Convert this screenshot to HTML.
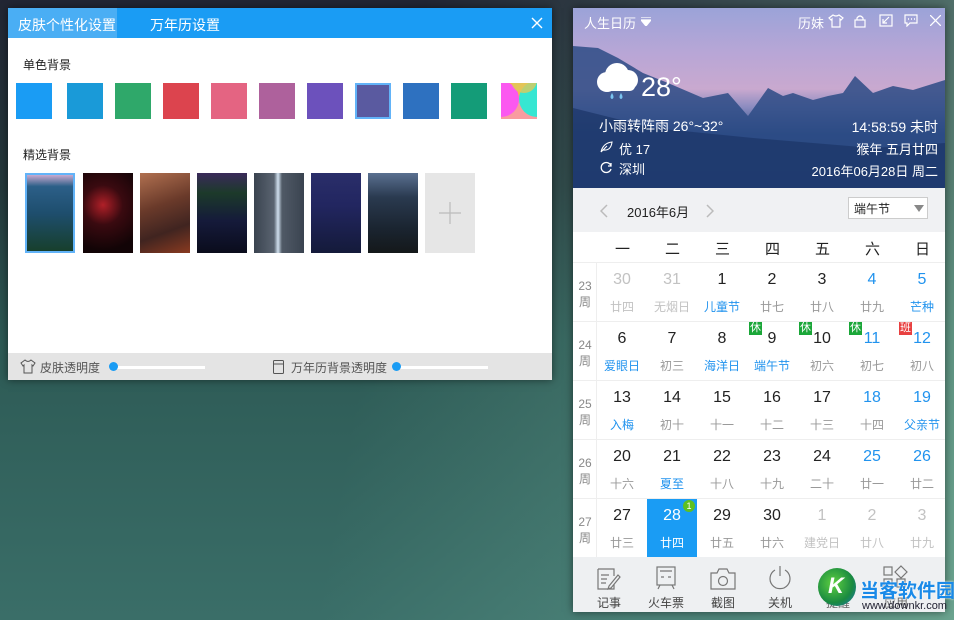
<!DOCTYPE html>
<html><head><meta charset="utf-8"><style>
*{margin:0;padding:0;box-sizing:border-box}
body{width:954px;height:620px;overflow:hidden;position:relative;font-family:"Liberation Sans","Noto Sans CJK SC",sans-serif;
background:linear-gradient(180deg,#222634 0%,#24383b 30%,#2d5a55 55%,#3a6e68 100%);}
.bgr{position:absolute;left:0;top:0;width:954px;height:620px;background:linear-gradient(100deg,rgba(0,0,0,0) 40%,rgba(120,180,160,.35) 80%,rgba(140,200,170,.6) 100%)}
.a{position:absolute;white-space:nowrap}
#lw{position:absolute;left:8px;top:8px;width:544px;height:372px;background:#fff;box-shadow:0 0 8px rgba(0,0,0,.5)}
#lt{position:absolute;left:0;top:0;width:544px;height:30px;background:#1a9cf4}
.sw{position:absolute;top:75px;width:36px;height:36px}
.th{position:absolute;top:165px;width:50px;height:80px}
#rw{position:absolute;left:573px;top:8px;width:372px;height:604px;background:#fff;box-shadow:0 0 8px rgba(0,0,0,.5);overflow:hidden}
.wk{position:absolute;left:0;width:24px;text-align:center;color:#888;font-size:12px;line-height:16px}
.c{position:absolute;width:50px;height:59px;text-align:center}
.c .n{position:absolute;top:8px;left:0;width:50px;font-size:16px;color:#222}
.c .l{position:absolute;top:35px;left:0;width:50px;font-size:12px;color:#999}
.b{color:#2193ee!important}.g{color:#c2c2c2!important}
.tag{position:absolute;top:0px;left:0;width:13px;height:13px;font-size:11px;line-height:13px;color:#fff;text-align:center}
.tb{position:absolute;top:583px;font-size:12px;color:#444;width:50px;text-align:center}
</style></head><body>
<div class="bgr"></div>

<div id="lw">
 <div id="lt">
  <div class="a" style="left:0;top:0;width:109px;height:30px;background:#4aaef4"></div>
  <div class="a" style="left:10px;top:7px;color:#fff;font-size:14px">皮肤个性化设置</div>
  <div class="a" style="left:142px;top:7px;color:#fff;font-size:14px">万年历设置</div>
  <svg class="a" style="left:523px;top:9px" width="12" height="12"><path d="M1 1L11 11M11 1L1 11" stroke="#fff" stroke-width="1.4"/></svg>
 </div>
 <div class="a" style="left:15px;top:48px;font-size:12px;color:#222">单色背景</div>
 <div class="sw" style="left:8px;background:#1a9cf4"></div>
 <div class="sw" style="left:59px;background:#1a9ad8"></div>
 <div class="sw" style="left:107px;background:#2fa86a"></div>
 <div class="sw" style="left:155px;background:#dc444e"></div>
 <div class="sw" style="left:203px;background:#e46482"></div>
 <div class="sw" style="left:251px;background:#ae619c"></div>
 <div class="sw" style="left:299px;background:#6c51bc"></div>
 <div class="sw" style="left:347px;background:#5a5aa0;border:2px solid #62b3f8"></div>
 <div class="sw" style="left:395px;background:#2e71c0"></div>
 <div class="sw" style="left:443px;background:#149c78"></div>
 <div class="sw" style="left:493px;overflow:hidden;background:#f99ca0">
  <div class="a" style="left:-8px;top:-18px;width:36px;height:36px;border-radius:50%;background:#fbb44e"></div>
  <div class="a" style="left:-18px;top:-2px;width:36px;height:36px;border-radius:50%;background:#fb58f0"></div>
  <div class="a" style="left:18px;top:-2px;width:36px;height:36px;border-radius:50%;background:#36e6d2"></div>
  <div class="a" style="left:10px;top:-16px;width:26px;height:26px;border-radius:50%;background:#dfc95a;opacity:.8"></div>
 </div>
 <div class="a" style="left:15px;top:138px;font-size:12px;color:#222">精选背景</div>
 <div class="th" style="left:17px;border:2px solid #62b3f8;background:linear-gradient(180deg,#c9a9cf 0%,#2c5f88 15%,#1e4e6e 50%,#173f2c 100%)"></div>
 <div class="th" style="left:75px;background:radial-gradient(circle at 40% 40%,#b02028 0%,#3a0a10 35%,#120406 80%)"></div>
 <div class="th" style="left:132px;background:linear-gradient(160deg,#b07050 0%,#6a3a2a 40%,#402420 70%,#8a3a20 100%)"></div>
 <div class="th" style="left:189px;background:linear-gradient(180deg,#3a2a5a 0%,#1c3a2a 25%,#151a3a 60%,#0a0c1c 100%)"></div>
 <div class="th" style="left:246px;background:linear-gradient(90deg,#3a4350 0%,#5a6470 40%,#d0e0ee 48%,#505a66 56%,#3a4350 100%)"></div>
 <div class="th" style="left:303px;background:linear-gradient(180deg,#2a2e6a 0%,#222660 40%,#141a3a 100%)"></div>
 <div class="th" style="left:360px;background:linear-gradient(180deg,#5a7090 0%,#2a3a50 30%,#1a2430 70%,#14181a 100%)"></div>
 <div class="th" style="left:417px;background:#e6e6e6">
  <svg class="a" style="left:14px;top:29px" width="22" height="22"><path d="M11 0V22M0 11H22" stroke="#bbb" stroke-width="1.2"/></svg>
 </div>
 <div class="a" style="left:0;top:345px;width:544px;height:27px;background:#e4e4e4"></div>
 <svg class="a" style="left:12px;top:351px" width="16" height="15"><path d="M5 1L1 4L3 7L4 6V14H12V6L13 7L15 4L11 1Q8 4 5 1Z" fill="none" stroke="#555" stroke-width="1"/></svg>
 <div class="a" style="left:32px;top:351px;font-size:12px;color:#555">皮肤透明度</div>
 <div class="a" style="left:107px;top:358px;width:90px;height:3px;background:#fff"></div>
 <div class="a" style="left:101px;top:354px;width:9px;height:9px;border-radius:50%;background:#1a9cf4"></div>
 <svg class="a" style="left:265px;top:352px" width="11" height="14"><rect x=".5" y=".5" width="10" height="13" rx="1" fill="none" stroke="#555"/><path d="M0 4H11" stroke="#555"/></svg>
 <div class="a" style="left:283px;top:351px;font-size:12px;color:#555">万年历背景透明度</div>
 <div class="a" style="left:390px;top:358px;width:90px;height:3px;background:#fff"></div>
 <div class="a" style="left:384px;top:354px;width:9px;height:9px;border-radius:50%;background:#1a9cf4"></div>
</div>

<div id="rw">
 <div class="a" style="left:0;top:0;width:372px;height:180px;background:linear-gradient(180deg,#9ba3d8 0%,#b8a6d6 25%,#c9a9cf 45%,#8c8cc0 55%,#2c4e86 70%,#1d3c6e 100%)"></div>
 <svg class="a" style="left:0;top:30px" width="372" height="150"><path d="M0 8L25 10L45 20L70 35L95 45L130 60L155 55L175 78L195 50L210 58L220 55L240 62L255 58L270 55L282 38L300 55L320 48L340 52L372 42V150H0Z" fill="#2d4b85" opacity=".85"/><path d="M0 70L80 90L180 100L300 110L372 105V150H0Z" fill="#1b3566" opacity=".7"/></svg>
 <div class="a" style="left:11px;top:5px;color:#fff;font-size:13px">人生日历</div>
 <svg class="a" style="left:68px;top:9px" width="10" height="9"><path d="M0 0H10M0 3H10L5 9Z" stroke="#fff" fill="#fff" stroke-width="1.2"/></svg>
 <div class="a" style="left:225px;top:5px;color:#fff;font-size:13px">历妹</div>
 <svg class="a" style="left:255px;top:6px" width="16" height="14"><path d="M5 1L1 4L3 6L4 5V13H12V5L13 6L15 4L11 1Q8 3 5 1Z" fill="none" stroke="#fff" stroke-width="1.2"/></svg>
 <svg class="a" style="left:281px;top:6px" width="12" height="14"><rect x="1" y="6" width="10" height="7" fill="none" stroke="#fff" stroke-width="1.2"/><path d="M3 6V4Q6 0 9 4V6" fill="none" stroke="#fff" stroke-width="1.2"/></svg>
 <svg class="a" style="left:306px;top:6px" width="14" height="13"><rect x="1" y="1" width="12" height="11" fill="none" stroke="#fff" stroke-width="1.2"/><path d="M4 9L10 3M4 5V9H8" fill="none" stroke="#fff" stroke-width="1.2"/></svg>
 <svg class="a" style="left:331px;top:6px" width="14" height="13"><path d="M1 1H13V9H6L3 12V9H1Z" fill="none" stroke="#fff" stroke-width="1.2"/><path d="M4 5H5M7 5H8M10 5H11" stroke="#fff" stroke-width="1.5"/></svg>
 <svg class="a" style="left:357px;top:7px" width="11" height="11"><path d="M0 0L11 11M11 0L0 11" stroke="#fff" stroke-width="1.3"/></svg>
 <svg class="a" style="left:22px;top:52px" width="46" height="44"><g fill="#fff"><circle cx="12" cy="22" r="10"/><circle cx="22" cy="15" r="12"/><circle cx="33" cy="20" r="10"/><rect x="4" y="20" width="36" height="11" rx="5"/></g><path d="M17 33Q14 38 17 39Q20 38 17 33ZM26 33Q23 38 26 39Q29 38 26 33Z" fill="#7ac4f0"/></svg>
 <div class="a" style="left:68px;top:64px;color:#fff;font-size:27px">28°</div>
 <div class="a" style="left:26px;top:108px;color:#fff;font-size:14px">小雨转阵雨 26°~32°</div>
 <svg class="a" style="left:27px;top:133px" width="13" height="12"><path d="M1 11Q3 2 12 1Q11 10 3 9M1 11L7 5" fill="none" stroke="#fff" stroke-width="1.1"/></svg>
 <div class="a" style="left:46px;top:131px;color:#fff;font-size:13px">优 17</div>
 <svg class="a" style="left:27px;top:153px" width="13" height="13"><path d="M11 5A5 5 0 1 0 11 8M11 2V5H8" fill="none" stroke="#fff" stroke-width="1.3"/></svg>
 <div class="a" style="left:46px;top:151px;color:#fff;font-size:13px">深圳</div>
 <div class="a" style="right:7px;top:109px;color:#fff;font-size:14px">14:58:59 未时</div>
 <div class="a" style="right:7px;top:131px;color:#fff;font-size:13px">猴年 五月廿四</div>
 <div class="a" style="right:7px;top:153px;color:#fff;font-size:13px">2016年06月28日 周二</div>

 <div class="a" style="left:0;top:180px;width:372px;height:44px;background:#f0f1f3"></div>
 <svg class="a" style="left:27px;top:196px" width="8" height="14"><path d="M7 1L1 7L7 13" fill="none" stroke="#bbb" stroke-width="1.5"/></svg>
 <div class="a" style="left:54px;top:194px;font-size:13px;color:#222">2016年6月</div>
 <svg class="a" style="left:133px;top:196px" width="8" height="14"><path d="M1 1L7 7L1 13" fill="none" stroke="#bbb" stroke-width="1.5"/></svg>
 <div class="a" style="left:275px;top:189px;width:80px;height:22px;background:#fff;border:1px solid #ccc"></div>
 <div class="a" style="left:281px;top:192px;font-size:12px;color:#222">端午节</div>
 <svg class="a" style="left:341px;top:197px" width="10" height="7"><path d="M0 0H10L5 7Z" fill="#888"/></svg>

 <div class="a" style="left:0;top:224px;width:372px;height:30px;background:#fff"></div>
 <div class="a" style="left:24px;top:230px;width:350px;font-size:15px;color:#222">
  <span class="a" style="left:18px">一</span><span class="a" style="left:68px">二</span><span class="a" style="left:118px">三</span><span class="a" style="left:168px">四</span><span class="a" style="left:218px">五</span><span class="a" style="left:268px">六</span><span class="a" style="left:318px">日</span>
 </div>
 <div class="a" style="left:23px;top:254px;width:1px;height:295px;background:#eee"></div>
 <div class="a" style="left:0;top:254px;width:372px;height:1px;background:#eee"></div>
 <div class="a" style="left:0;top:313px;width:372px;height:1px;background:#eee"></div>
 <div class="a" style="left:0;top:372px;width:372px;height:1px;background:#eee"></div>
 <div class="a" style="left:0;top:431px;width:372px;height:1px;background:#eee"></div>
 <div class="a" style="left:0;top:490px;width:372px;height:1px;background:#eee"></div>
 <div class="wk" style="top:270px">23<br>周</div>
 <div class="wk" style="top:329px">24<br>周</div>
 <div class="wk" style="top:388px">25<br>周</div>
 <div class="wk" style="top:447px">26<br>周</div>
 <div class="wk" style="top:506px">27<br>周</div>

 <div class="c" style="left:24px;top:255px"><div class="n g">30</div><div class="l g">廿四</div></div>
 <div class="c" style="left:74px;top:255px"><div class="n g">31</div><div class="l g">无烟日</div></div>
 <div class="c" style="left:124px;top:255px"><div class="n">1</div><div class="l b">儿童节</div></div>
 <div class="c" style="left:174px;top:255px"><div class="n">2</div><div class="l">廿七</div></div>
 <div class="c" style="left:224px;top:255px"><div class="n">3</div><div class="l">廿八</div></div>
 <div class="c" style="left:274px;top:255px"><div class="n b">4</div><div class="l">廿九</div></div>
 <div class="c" style="left:324px;top:255px"><div class="n b">5</div><div class="l b">芒种</div></div>
 <div class="c" style="left:24px;top:314px"><div class="n">6</div><div class="l b">爱眼日</div></div>
 <div class="c" style="left:74px;top:314px"><div class="n">7</div><div class="l">初三</div></div>
 <div class="c" style="left:124px;top:314px"><div class="n">8</div><div class="l b">海洋日</div></div>
 <div class="c" style="left:174px;top:314px"><div class="tag" style="left:2px;background:#1aa638">休</div><div class="n">9</div><div class="l b">端午节</div></div>
 <div class="c" style="left:224px;top:314px"><div class="tag" style="left:2px;background:#1aa638">休</div><div class="n">10</div><div class="l">初六</div></div>
 <div class="c" style="left:274px;top:314px"><div class="tag" style="left:2px;background:#1aa638">休</div><div class="n b">11</div><div class="l">初七</div></div>
 <div class="c" style="left:324px;top:314px"><div class="tag" style="left:2px;background:#e84040">班</div><div class="n b">12</div><div class="l">初八</div></div>
 <div class="c" style="left:24px;top:373px"><div class="n">13</div><div class="l b">入梅</div></div>
 <div class="c" style="left:74px;top:373px"><div class="n">14</div><div class="l">初十</div></div>
 <div class="c" style="left:124px;top:373px"><div class="n">15</div><div class="l">十一</div></div>
 <div class="c" style="left:174px;top:373px"><div class="n">16</div><div class="l">十二</div></div>
 <div class="c" style="left:224px;top:373px"><div class="n">17</div><div class="l">十三</div></div>
 <div class="c" style="left:274px;top:373px"><div class="n b">18</div><div class="l">十四</div></div>
 <div class="c" style="left:324px;top:373px"><div class="n b">19</div><div class="l b">父亲节</div></div>
 <div class="c" style="left:24px;top:432px"><div class="n">20</div><div class="l">十六</div></div>
 <div class="c" style="left:74px;top:432px"><div class="n">21</div><div class="l b">夏至</div></div>
 <div class="c" style="left:124px;top:432px"><div class="n">22</div><div class="l">十八</div></div>
 <div class="c" style="left:174px;top:432px"><div class="n">23</div><div class="l">十九</div></div>
 <div class="c" style="left:224px;top:432px"><div class="n">24</div><div class="l">二十</div></div>
 <div class="c" style="left:274px;top:432px"><div class="n b">25</div><div class="l">廿一</div></div>
 <div class="c" style="left:324px;top:432px"><div class="n b">26</div><div class="l">廿二</div></div>
 <div class="c" style="left:24px;top:491px"><div class="n">27</div><div class="l">廿三</div></div>
 <div class="c" style="left:74px;top:491px;background:#1a9cf4"><div class="n" style="color:#fff">28</div><div class="l" style="color:#fff">廿四</div><div class="a" style="left:36px;top:1px;width:12px;height:12px;border-radius:50%;background:#5ec020;color:#fff;font-size:9px;line-height:12px;text-align:center">1</div></div>
 <div class="c" style="left:124px;top:491px"><div class="n">29</div><div class="l">廿五</div></div>
 <div class="c" style="left:174px;top:491px"><div class="n">30</div><div class="l">廿六</div></div>
 <div class="c" style="left:224px;top:491px"><div class="n g">1</div><div class="l g">建党日</div></div>
 <div class="c" style="left:274px;top:491px"><div class="n g">2</div><div class="l g">廿八</div></div>
 <div class="c" style="left:324px;top:491px"><div class="n g">3</div><div class="l g">廿九</div></div>

 <div class="a" style="left:0;top:549px;width:372px;height:55px;background:#eef0f2"></div>
 <svg class="a" style="left:24px;top:560px" width="24" height="22"><path d="M1 1H17V8M1 1V21H17V16M4 7H12M4 11H10M4 15H9M12 18L21 7L23 9L14 20L11 21Z" fill="none" stroke="#777" stroke-width="1.2"/></svg>
 <div class="tb" style="left:11px;top:586px">记事</div>
 <svg class="a" style="left:83px;top:558px" width="20" height="24"><rect x="1" y="1" width="18" height="18" fill="none" stroke="#777" stroke-width="1.2"/><path d="M4 5H16M5 11H8M12 11H15M4 19L2 23M16 19L18 23" fill="none" stroke="#777" stroke-width="1.2"/></svg>
 <div class="tb" style="left:68px;top:586px">火车票</div>
 <svg class="a" style="left:137px;top:560px" width="26" height="22"><path d="M1 5H7L9 1H17L19 5H25V21H1Z" fill="none" stroke="#777" stroke-width="1.2"/><circle cx="13" cy="13" r="4.5" fill="none" stroke="#777" stroke-width="1.2"/></svg>
 <div class="tb" style="left:125px;top:586px">截图</div>
 <svg class="a" style="left:195px;top:557px" width="24" height="26"><path d="M7 5A10 10 0 1 0 17 5M12 1V11" fill="none" stroke="#777" stroke-width="1.2"/></svg>
 <div class="tb" style="left:182px;top:586px">关机</div>
 <svg class="a" style="left:310px;top:557px" width="26" height="24"><rect x="1" y="2" width="8" height="8" fill="none" stroke="#777" stroke-width="1.2"/><path d="M18 1L24 7L18 13L12 7Z M1 14H9V22H1Z M14 14H22V22H14Z" fill="none" stroke="#777" stroke-width="1.2"/></svg>
 <div class="tb" style="left:298px;top:586px;color:#666">应用</div>
 <div class="tb" style="left:240px;top:586px;color:#666">提醒</div>
</div>
<div class="a" style="left:818px;top:568px;width:38px;height:38px;border-radius:50%;background:radial-gradient(circle at 40% 40%,#5ed040 0%,#1a8a40 60%,#1a70c0 100%)"></div>
<div class="a" style="left:828px;top:573px;color:#fff;font-size:22px;font-weight:bold;font-style:italic">K</div>
<div class="a" style="left:860px;top:576px;font-size:19px;font-weight:bold;color:#1a8ae8;text-shadow:0 0 2px #fff">当客软件园</div>
<div class="a" style="left:862px;top:600px;font-size:11px;color:#223">www.downkr.com</div>
</body></html>
